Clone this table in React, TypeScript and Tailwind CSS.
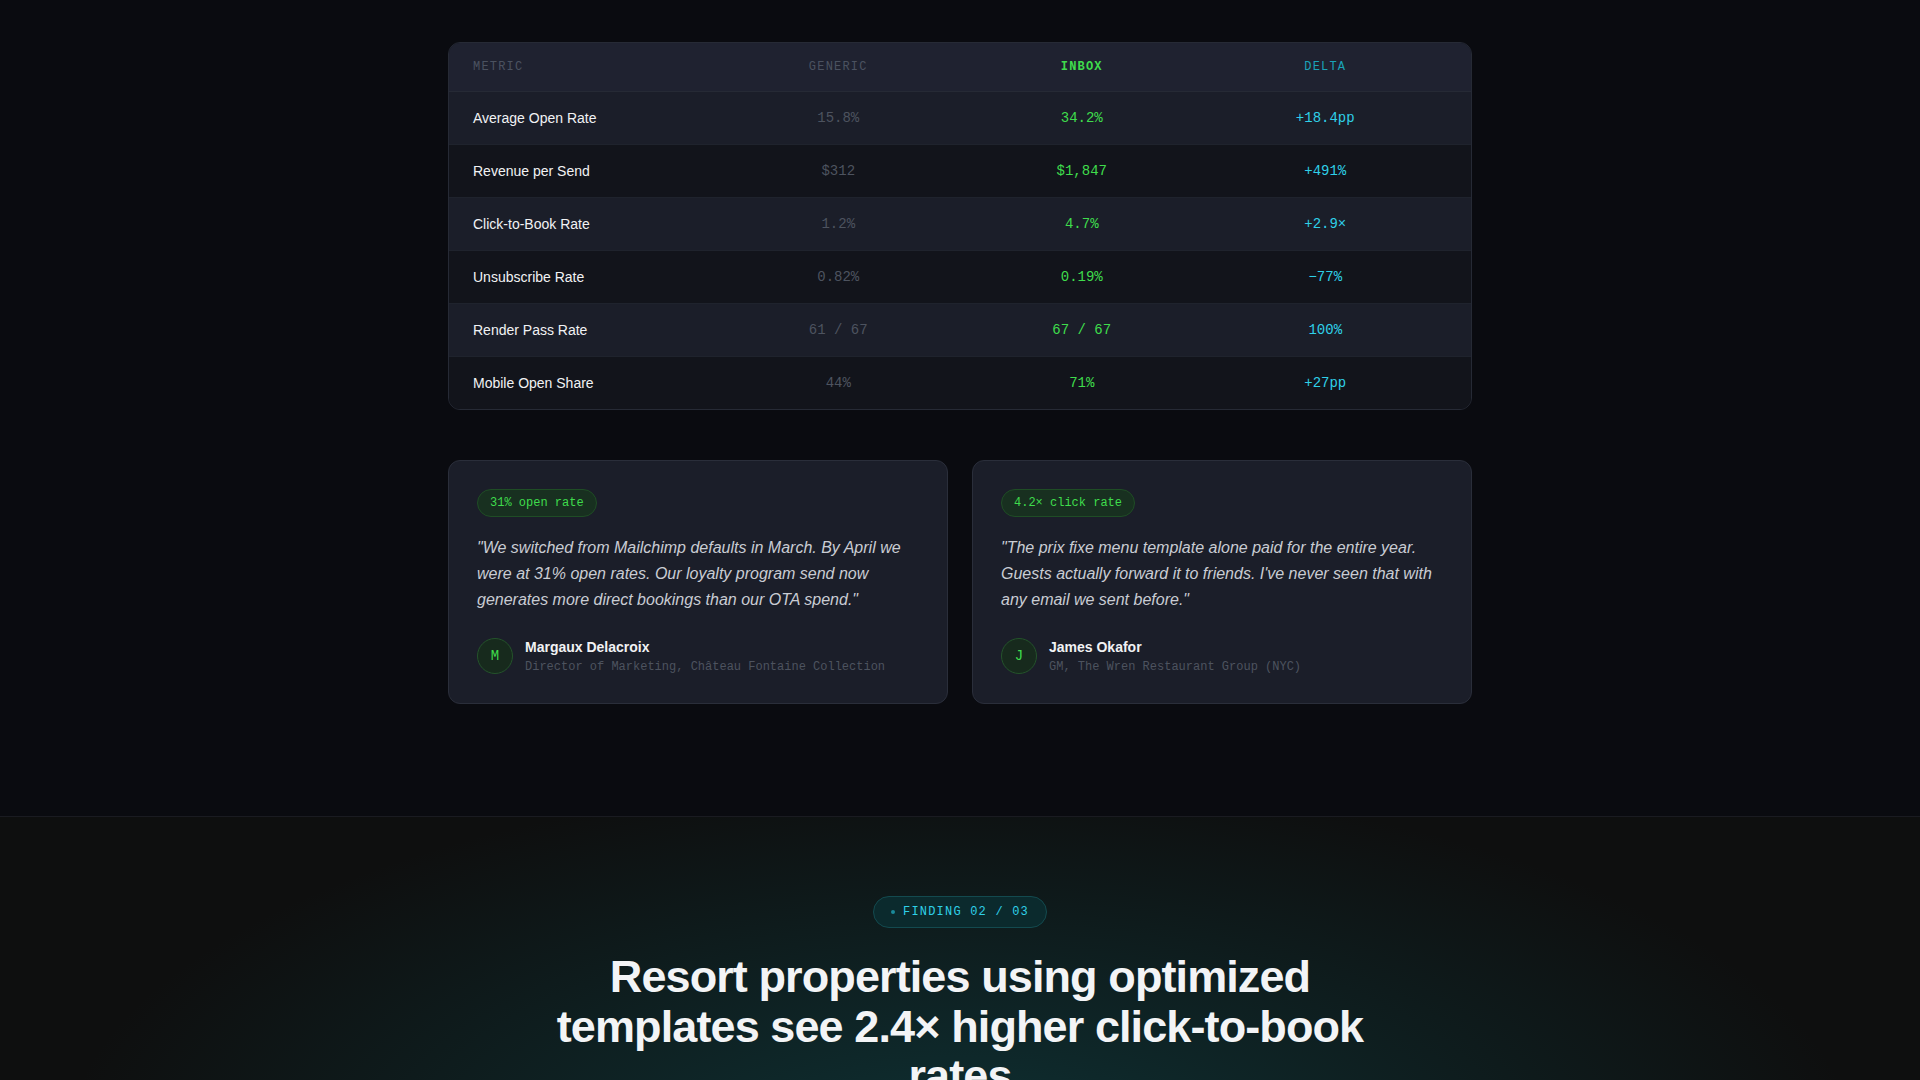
const SANS = "font-['Liberation_Sans',Arial,sans-serif]";
const MONO = "font-['Liberation_Mono','Courier_New',monospace]";

const ROWS = [
  { metric: "Average Open Rate", generic: "15.8%", inbox: "34.2%", delta: "+18.4pp" },
  { metric: "Revenue per Send", generic: "$312", inbox: "$1,847", delta: "+491%" },
  { metric: "Click-to-Book Rate", generic: "1.2%", inbox: "4.7%", delta: "+2.9×" },
  { metric: "Unsubscribe Rate", generic: "0.82%", inbox: "0.19%", delta: "−77%" },
  { metric: "Render Pass Rate", generic: "61 / 67", inbox: "67 / 67", delta: "100%" },
  { metric: "Mobile Open Share", generic: "44%", inbox: "71%", delta: "+27pp" },
];

const QUOTES = [
  {
    badge: "31% open rate",
    text: "\"We switched from Mailchimp defaults in March. By April we were at 31% open rates. Our loyalty program send now generates more direct bookings than our OTA spend.\"",
    initial: "M",
    name: "Margaux Delacroix",
    role: "Director of Marketing, Château Fontaine Collection",
  },
  {
    badge: "4.2× click rate",
    text: "\"The prix fixe menu template alone paid for the entire year. Guests actually forward it to friends. I've never seen that with any email we sent before.\"",
    initial: "J",
    name: "James Okafor",
    role: "GM, The Wren Restaurant Group (NYC)",
  },
];

function ComparisonTable() {
  return (
    <div className="overflow-hidden rounded-xl border border-[#262a35] bg-[#12141b]">
      <div className={`grid grid-cols-4 border-b border-[#262a35] bg-[#1f2230] px-6 py-4 text-xs uppercase leading-4 tracking-[0.1em] ${MONO}`}>
        <div className="text-[#4b5260]">Metric</div>
        <div className="text-center text-[#4b5260]">Generic</div>
        <div className="text-center font-bold text-[#3fdc4c]">Inbox</div>
        <div className="text-center text-[#1aa3b8]">Delta</div>
      </div>
      {ROWS.map((r, i) => (
        <div
          key={r.metric}
          className={`grid grid-cols-4 items-center px-6 py-4 text-sm leading-5 ${i < ROWS.length - 1 ? "border-b border-[#1f232d]" : ""} ${i % 2 === 0 ? "bg-[#1b1e29]" : "bg-[#12141b]"}`}
        >
          <div className={`text-[#f1f2f4] ${SANS}`}>{r.metric}</div>
          <div className={`text-center text-[#4d535f] ${MONO}`}>{r.generic}</div>
          <div className={`text-center text-[#3fdc4c] ${MONO}`}>{r.inbox}</div>
          <div className={`text-center text-[#2fd0e8] ${MONO}`}>{r.delta}</div>
        </div>
      ))}
    </div>
  );
}

function QuoteCard({ q }: { q: (typeof QUOTES)[number] }) {
  return (
    <div className="rounded-xl border border-[#2a2e3a] bg-[#1b1e29] p-7">
      <span className={`inline-block rounded-full border border-[#1f4d25] bg-[#183020] px-3 py-[5px] text-xs leading-4 text-[#3fdc4c] ${MONO}`}>
        {q.badge}
      </span>
      <p className={`mt-[18px] text-base italic leading-[26px] text-[#c9ccd3] ${SANS}`}>{q.text}</p>
      <div className="mt-6 flex items-center gap-3">
        <div className={`flex h-9 w-9 items-center justify-center rounded-full border border-[#24532b] bg-[#172a1d] text-sm text-[#3fdc4c] ${MONO}`}>
          {q.initial}
        </div>
        <div>
          <div className={`text-sm font-bold leading-5 text-[#f1f2f4] ${SANS}`}>{q.name}</div>
          <div className={`mt-0.5 text-xs leading-4 text-[#4d535f] ${MONO}`}>{q.role}</div>
        </div>
      </div>
    </div>
  );
}

export default function App() {
  return (
    <div className={`min-h-screen bg-[#0a0b10] ${SANS}`}>
      <section className="px-6 pb-28 pt-[42px]">
        <div className="mx-auto w-full max-w-5xl">
          <ComparisonTable />
          <div className="mt-[50px] grid grid-cols-2 gap-6">
            {QUOTES.map((q) => (
              <QuoteCard key={q.name} q={q} />
            ))}
          </div>
        </div>
      </section>

      <section className="min-h-[600px] border-t border-[#1a1b21] bg-[#0e0f0f] bg-[radial-gradient(ellipse_900px_380px_at_50%_340px,rgba(14,90,96,0.45),rgba(14,15,15,0)_100%)] px-6 pt-[79px]">
        <div className="flex flex-col items-center">
          <span className={`inline-flex items-center gap-2 rounded-full border border-[#134a4f] bg-[#0b2a2d] px-[17px] py-[7px] text-xs leading-4 tracking-[0.1em] text-[#2fd0e8] ${MONO}`}>
            <span className="h-1 w-1 rounded-full bg-[#1a8a99]" />
            FINDING 02 / 03
          </span>
          <h2 className={`mt-6 max-w-4xl text-center text-[45px] font-bold leading-[1.1] tracking-[-0.02em] text-[#f3f4f6] ${SANS}`}>
            Resort properties using optimized templates see 2.4× higher click-to-book rates
          </h2>
        </div>
      </section>
    </div>
  );
}
